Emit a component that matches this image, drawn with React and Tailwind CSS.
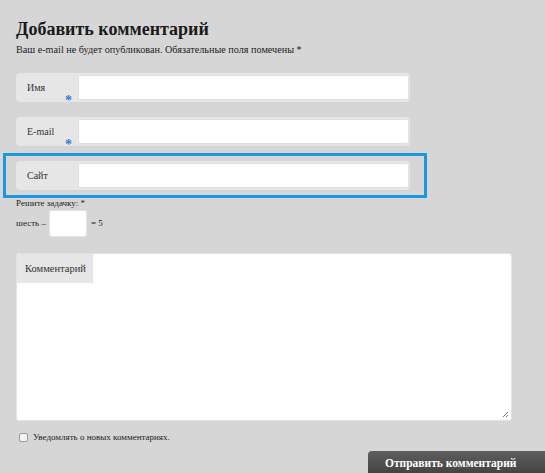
import React from "react";

function Field({ label, required }) {
  return (
    <div className="relative flex h-[29px] w-[394px] rounded-[4px] bg-[#e6e6e6]">
      <div className="flex w-[62px] shrink-0 items-center pl-[11px] text-[10px] leading-[12px] text-[#333]">{label}</div>
      <div className="my-[2px] mr-[1px] flex-1 rounded-[2px] border border-[#e0e0e0] bg-white"></div>
      {required && (
        <span className="absolute left-[49px] top-[21px] text-[14px] font-bold leading-none text-[#3a7bd5]">*</span>
      )}
    </div>
  );
}

export default function App() {
  return (
    <div className="h-[473px] w-[545px] overflow-hidden bg-[#d6d6d6] font-['Liberation_Serif','Times_New_Roman',serif] text-[#222]">
      <div className="flex flex-col pl-4 pt-[17px]">
        <h2 className="text-[18px] font-bold leading-[24px] text-[#1a1a1a]">Добавить комментарий</h2>
        <p className="mt-[2px] text-[10.2px] leading-[14px]">Ваш e-mail не будет опубликован. Обязательные поля помечены *</p>
        <div className="mt-[16px] flex flex-col gap-[15px]">
          <Field label="Имя" required />
          <Field label="E-mail" required />
        </div>
        <div className="-ml-[13px] mt-[7px] w-[424px] border-[3px] border-[#1b98e0] py-[5px] pl-[10px]">
          <Field label="Сайт" />
        </div>
        <p className="text-[9px] leading-[11px]">Решите задачку: *</p>
        <div className="mt-[1px] flex items-center text-[9px] leading-[11px]">
          <span>шесть –</span>
          <div className="ml-[3px] mr-[4px] h-[27px] w-[38px] rounded-[3px] border border-[#e4e4e4] bg-white"></div>
          <span>= 5</span>
        </div>
        <div className="relative mt-[16px] h-[168px] w-[496px] rounded-[3px] border border-[#e2e2e2] bg-white">
          <div className="flex h-[29px] w-[76px] items-center rounded-tl-[3px] bg-[#e6e6e6] pl-[8px] text-[10.5px] leading-[13px] text-[#333]">Комментарий</div>
          <svg className="absolute bottom-[2px] right-[2px]" width="7" height="7" viewBox="0 0 7 7">
            <path d="M6 1L1 6M6 4L4 6" stroke="#777" strokeWidth="1" />
          </svg>
        </div>
        <label className="mt-[10px] flex h-[12px] items-center gap-[5px] pl-[3px] text-[9px] leading-[12px]">
          <span className="h-[9px] w-[9px] rounded-[2px] border border-[#999] bg-[#f4f4f4]"></span>
          <span>Уведомлять о новых комментариях.</span>
        </label>
        <div className="mt-[8px] flex justify-end">
          <button className="h-[30px] w-[177px] rounded-tl-[4px] bg-gradient-to-b from-[#5f5f5f] to-[#3a3a3a] pb-[6px] pl-[17px] text-left font-['Liberation_Serif','Times_New_Roman',serif] text-[11.5px] font-bold leading-[16px] text-white">
            Отправить комментарий
          </button>
        </div>
      </div>
    </div>
  );
}
